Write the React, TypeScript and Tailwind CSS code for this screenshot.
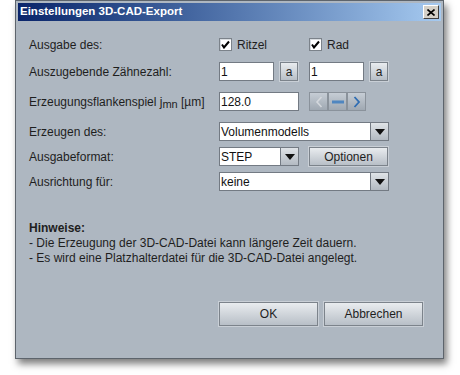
import React from 'react';

const font = "font-['Liberation_Sans',Arial,sans-serif]";

const Checkbox: React.FC<{ label: string; checked?: boolean }> = ({ label, checked = true }) => (
  <label className="flex items-center gap-[5px] text-[12px] text-[#1e1e1e]">
    <span className="flex h-[13px] w-[13px] items-center justify-center border border-[#7b828a] bg-white shadow-[inset_1px_1px_0_#d8dce0]">
      {checked && (
        <svg width="9" height="9" viewBox="0 0 9 9">
          <path d="M1 4.5 L3 7.5 L8 1.5" stroke="#000" strokeWidth="2" fill="none" />
        </svg>
      )}
    </span>
    {label}
  </label>
);

const TextInput: React.FC<{ value: string; width: string }> = ({ value, width }) => (
  <div className={`${width} flex h-[19px] items-center border border-[#737a83] bg-white pl-[1px] text-[12px] text-[#111]`}>
    {value}
  </div>
);

const Button: React.FC<{ children: React.ReactNode; className?: string }> = ({ children, className }) => (
  <button
    type="button"
    className={`flex items-center justify-center border border-[#7c838b] bg-gradient-to-b from-[#e9ecef] to-[#b8bfc7] text-[12px] text-[#1e1e1e] shadow-[0_0_0_1px_#c9cfd6] ${className ?? ''}`}
  >
    {children}
  </button>
);

const Arrow = () => (
  <div className="flex h-full w-[18px] items-center justify-center border-l border-[#737a83] bg-gradient-to-b from-[#dfe3e7] to-[#b3bac2]">
    <svg width="10" height="6" viewBox="0 0 10 6">
      <path d="M0 0 H10 L5 6 Z" fill="#111" />
    </svg>
  </div>
);

const Select: React.FC<{ value: string; width: string }> = ({ value, width }) => (
  <div className={`${width} flex h-[19px] items-stretch border border-[#737a83] bg-white text-[12px] text-[#111]`}>
    <span className="flex flex-1 items-center pl-[1px]">{value}</span>
    <Arrow />
  </div>
);

const Row: React.FC<{ label: React.ReactNode; children: React.ReactNode; className?: string }> = ({ label, children, className }) => (
  <div className={`flex h-[19px] items-center ${className ?? ''}`}>
    <div className="w-[190px] text-[12px] text-[#1e1e1e]">{label}</div>
    <div className="flex items-center">{children}</div>
  </div>
);

const NavButton: React.FC<{ children: React.ReactNode }> = ({ children }) => (
  <div className="flex h-[19px] w-[19px] items-center justify-center border border-[#8a929b] bg-gradient-to-b from-[#c6cdd5] to-[#9fa8b2]">
    {children}
  </div>
);

export default function App() {
  return (
    <div className={`h-[375px] w-[460px] overflow-hidden bg-white ${font}`}>
      <div className="ml-[15px] flex h-[359px] w-[429px] flex-col border border-[#5d646c] bg-[#aeb7c1] p-[2px] shadow-[3px_5px_7px_rgba(0,0,0,0.5)]">
        <div className="flex h-[18px] items-center justify-between bg-gradient-to-r from-[#0a246a] to-[#a6caf0] pl-[2px] pr-[2px]">
          <span className="text-[11.5px] font-bold text-white">Einstellungen 3D-CAD-Export</span>
          <div className="flex h-[14px] w-[16px] items-center justify-center border border-t-white border-l-white border-r-[#404040] border-b-[#404040] bg-[#d4d0c8]">
            <svg width="8" height="7" viewBox="0 0 8 7">
              <path d="M0.5 0.5 L7.5 6.5 M7.5 0.5 L0.5 6.5" stroke="#000" strokeWidth="1.6" />
            </svg>
          </div>
        </div>

        <div className="flex flex-1 flex-col pl-[11px] pr-[18px]">
          <Row label="Ausgabe des:" className="mt-[14px]">
            <div className="w-[90px]">
              <Checkbox label="Ritzel" />
            </div>
            <Checkbox label="Rad" />
          </Row>

          <Row label="Auszugebende Zähnezahl:" className="mt-[8px]">
            <TextInput value="1" width="w-[55px]" />
            <Button className="ml-[6px] h-[19px] w-[18px]">a</Button>
            <TextInput value="1" width="ml-[11px] w-[55px]" />
            <Button className="ml-[6px] h-[19px] w-[18px]">a</Button>
          </Row>

          <Row
            label={
              <span>
                Erzeugungsflankenspiel j<sub className="text-[11px]">mn</sub> [µm]
              </span>
            }
            className="mt-[11px]"
          >
            <TextInput value="128.0" width="w-[80px]" />
            <div className="ml-[10px] flex">
              <NavButton>
                <svg width="8" height="12" viewBox="0 0 8 12">
                  <path d="M6.5 1 L2 6 L6.5 11" stroke="#d3d7dc" strokeWidth="1.6" fill="none" />
                </svg>
              </NavButton>
              <NavButton>
                <svg width="12" height="4" viewBox="0 0 12 4">
                  <rect x="0" y="0.5" width="12" height="3" fill="#4f86c0" />
                </svg>
              </NavButton>
              <NavButton>
                <svg width="8" height="12" viewBox="0 0 8 12">
                  <path d="M1.5 1 L6 6 L1.5 11" stroke="#2f6db3" strokeWidth="1.8" fill="none" />
                </svg>
              </NavButton>
            </div>
          </Row>

          <Row label="Erzeugen des:" className="mt-[11px]">
            <Select value="Volumenmodells" width="w-[170px]" />
          </Row>

          <Row label="Ausgabeformat:" className="mt-[6px]">
            <Select value="STEP" width="w-[80px]" />
            <Button className="ml-[10px] h-[19px] w-[79px]">Optionen</Button>
          </Row>

          <Row label="Ausrichtung für:" className="mt-[6px]">
            <Select value="keine" width="w-[170px]" />
          </Row>

          <div className="mt-[30px] text-[12px] leading-[15px] text-[#1e1e1e]">
            <div className="font-bold">Hinweise:</div>
            <div>- Die Erzeugung der 3D-CAD-Datei kann längere Zeit dauern.</div>
            <div>- Es wird eine Platzhalterdatei für die 3D-CAD-Datei angelegt.</div>
          </div>

          <div className="mt-[36px] flex justify-end gap-[6px]">
            <Button className="h-[24px] w-[99px]">OK</Button>
            <Button className="h-[24px] w-[99px]">Abbrechen</Button>
          </div>
        </div>
      </div>
    </div>
  );
}
